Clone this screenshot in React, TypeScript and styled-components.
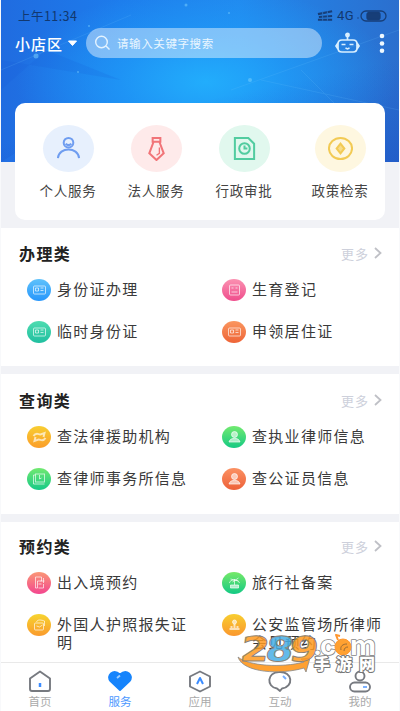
import React from 'react';
import styled, { createGlobalStyle } from 'styled-components';

const GlobalStyle = createGlobalStyle`
  * { box-sizing: border-box; }
  body {
    margin: 0;
    background: #fff;
    font-family: 'Noto Sans CJK SC', 'Noto Sans', sans-serif;
  }
  svg { display: block; flex: none; }
`;

const Screen = styled.div`
  position: relative;
  width: 400px;
  height: 711px;
  overflow: hidden;
  display: flex;
  flex-direction: column;
  background: #f1f2f6;
  border-left: 1px solid #f8f9fb;
  border-right: 1px solid #f8f9fb;
`;

const Hero = styled.header`
  height: 162px;
  flex: none;
  position: relative;
  color: #fff;
  background:
    linear-gradient(168deg, transparent 58%, rgba(20, 60, 190, 0.35) 100%),
    radial-gradient(ellipse 190px 95px at 205px 82px, #22adfc 0%, rgba(31, 160, 250, 0.65) 45%, transparent 100%),
    linear-gradient(90deg, #206ce0 0%, #1d7cec 30%, #2188ee 60%, #2b6fce 100%);
`;

const HeroArt = styled.svg`
  position: absolute;
  inset: 0;
`;

const StatusBar = styled.div`
  position: relative;
  height: 28px;
  padding: 3px 12px 0 17px;
  display: flex;
  justify-content: space-between;
  align-items: center;
  font-size: 12.5px;
  letter-spacing: 0.45px;
  color: #12386f;
`;

const StatusIcons = styled.div`
  display: flex;
  align-items: center;
  gap: 3px;
  font-family: Roboto, sans-serif;
  font-size: 13px;
`;

const SearchRow = styled.div`
  position: relative;
  height: 30px;
  display: flex;
  align-items: center;
  padding-left: 14px;
`;

const District = styled.div`
  display: flex;
  align-items: center;
  gap: 4px;
  width: 71px;
  font-size: 15px;
  font-weight: 500;
  letter-spacing: 1px;
  white-space: nowrap;
`;

const SearchBox = styled.div`
  display: flex;
  align-items: center;
  gap: 6px;
  width: 236px;
  height: 30px;
  border-radius: 15px;
  padding-left: 8px;
  background: rgba(255, 255, 255, 0.43);
  font-size: 11.5px;
  letter-spacing: 0.6px;
  color: #eaf6ff;
`;

const HeroActions = styled.div`
  display: flex;
  align-items: center;
  gap: 18px;
  margin-left: 12px;
`;

const ServiceCard = styled.section`
  position: relative;
  display: flex;
  flex: none;
  width: 370px;
  height: 117px;
  margin: -59px 0 8px 14px;
  padding: 22px 0 0 9px;
  background: #fff;
  border-radius: 10px;
`;

const Service = styled.div`
  width: 88px;
  display: flex;
  flex-direction: column;
  align-items: center;
  gap: 8px;
  font-size: 13.5px;
  line-height: 20px;
  letter-spacing: 0.8px;
  color: #444;
  white-space: nowrap;
  &:last-child { margin-left: 8px; }
`;

const ServiceDisc = styled.div<{ $tint: string }>`
  width: 51px;
  height: 47px;
  border-radius: 50%;
  display: grid;
  place-items: center;
  background: ${p => p.$tint};
`;

const Panel = styled.section<{ $height: number }>`
  flex: none;
  height: ${p => p.$height}px;
  margin-bottom: 8px;
  padding-left: 18px;
  background: #fff;
`;

const PanelHead = styled.div<{ $top: number }>`
  display: flex;
  align-items: center;
  justify-content: space-between;
  height: 24px;
  margin-top: ${p => p.$top}px;
  padding-right: 17px;
`;

const PanelTitle = styled.h2`
  margin: 0;
  font-size: 16px;
  line-height: 24px;
  font-weight: 700;
  letter-spacing: 1.4px;
  color: #222;
`;

const More = styled.span`
  display: flex;
  align-items: center;
  gap: 5px;
  font-size: 13px;
  letter-spacing: 1px;
  color: #cdd0db;
`;

const Entries = styled.div`
  display: grid;
  grid-template-columns: 195px 1fr;
  grid-auto-rows: 42px;
  padding: 14px 0 0 8px;
`;

const Entry = styled.div`
  display: flex;
  align-items: flex-start;
  gap: 6px;
`;

const EntryText = styled.span`
  width: 138px;
  padding-top: 1px;
  font-size: 15px;
  line-height: 18px;
  letter-spacing: 1.3px;
  color: #3a3a3a;
`;

const Disc = styled.div<{ $from: string; $to: string }>`
  width: 24px;
  height: 22px;
  flex: none;
  border-radius: 50%;
  display: grid;
  place-items: center;
  background: linear-gradient(${p => p.$from}, ${p => p.$to});
`;

const TabBar = styled.nav`
  position: absolute;
  left: 0;
  right: 0;
  bottom: 0;
  height: 49px;
  display: grid;
  grid-template-columns: repeat(5, 80px);
  margin-left: -1px;
  background: #fff;
  border-top: 1px solid #e9e9e9;
`;

const Tab = styled.div<{ $active?: boolean }>`
  display: flex;
  flex-direction: column;
  align-items: center;
  padding-top: 7px;
  font-size: 11.5px;
  line-height: 16px;
  color: ${p => (p.$active ? '#4c98ff' : '#aaa')};
`;

const Watermark = styled.svg`
  position: absolute;
  left: 233px;
  top: 632px;
`;

type Glyph = 'card' | 'form' | 'swap' | 'book' | 'person' | 'pass' | 'palm' | 'group' | 'case';

const glyphs: Record<Glyph, React.ReactNode> = {
  card: <><rect x="1" y="3" width="12" height="8" rx="1" /><path d="M3 5h3v3H3zM8 5h3M8 7.500h3" /></>,
  form: <><rect x="2" y="2" width="10" height="10" rx="1" /><path d="M4 5h2M8 5h2M4 9h6" /></>,
  swap: <path d="M1 6c3-5 6 0 8-2l3-1-1 4M13 8c-3 5-6 0-8 2l-3 1 1-4" strokeWidth="2" />,
  book: <><rect x="3" y="2" width="9" height="8" /><path d="M3 3H1v9h11M7 3v4l2-1" /></>,
  person: <><circle cx="7" cy="4.500" r="3" fill="#fff" /><path d="M1.500 12c1-5 10-5 11 0z" fill="#fff" /></>,
  pass: <><path d="M3 1h6v4H5v7H3zM6 12h5V8M8 5h4M11 2v5" /><path d="M6 8h3" /></>,
  palm: <><path d="M2 7c0-4 9-4 10 0M7 3v6M3 3l8 2M11 2 5 6" /><path d="M3 9h8v3H3z" fill="#fff" /></>,
  group: <><circle cx="7" cy="4" r="2" fill="#fff" /><path d="M2 11h10M3 9h2M9 9h2M7 6v4" strokeWidth="2" /></>,
  case: <><rect x="2" y="5" width="9" height="7" rx="1" /><path d="M4 4c1-3 5-2 8-1v5M4 8l3 1 3-2" /></>,
};

type Item = [label: string, glyph: Glyph, from: string, to: string];

const panels: { title: string; height: number; top: number; items: Item[] }[] = [
  {
    title: '办理类', height: 138, top: 13,
    items: [
      ['身份证办理', 'card', '#5fc2fb', '#2796fb'],
      ['生育登记', 'form', '#fb91b1', '#ef4d8c'],
      ['临时身份证', 'card', '#4fdcb0', '#20bfa0'],
      ['申领居住证', 'card', '#fa965f', '#ee6437'],
    ],
  },
  {
    title: '查询类', height: 140, top: 14,
    items: [
      ['查法律援助机构', 'swap', '#f8ce32', '#fb9d29'],
      ['查执业律师信息', 'person', '#72ea70', '#15c983'],
      ['查律师事务所信息', 'book', '#72e970', '#16c988'],
      ['查公证员信息', 'person', '#fb9163', '#ed6139'],
    ],
  },
  {
    title: '预约类', height: 190, top: 12,
    items: [
      ['出入境预约', 'pass', '#fa9776', '#f3468f'],
      ['旅行社备案', 'palm', '#76e968', '#13c985'],
      ['外国人护照报失证明', 'case', '#f7d42f', '#fa9a2d'],
      ['公安监管场所律师会见预约', 'group', '#f8ce30', '#fa972e'],
    ],
  },
];

const services = [
  {
    label: '个人服务', tint: '#e7f0fd', color: '#6f9df0',
    art: <><circle cx="13" cy="7" r="5" /><path d="M2 23c1-12 21-12 22 0M10 8c2 2 4 2 6 0" /></>,
  },
  {
    label: '法人服务', tint: '#feeaea', color: '#f17478',
    art: <><path d="M9 2h8v4H9zM10 6 5.500 18l7.500 7 7.500-7L16 6" /><path d="M16 12v6l-3 2" strokeWidth="1.400" /></>,
  },
  {
    label: '行政审批', tint: '#e1f8ee', color: '#52cca0',
    art: <><path d="M3 2h14l6 6v16H3z" /><circle cx="13" cy="13" r="5.500" /><path d="M13 10v3h3" /></>,
  },
  {
    label: '政策检索', tint: '#fef7e0', color: '#f2ca54',
    art: <><ellipse cx="13" cy="13" rx="12" ry="11" /><path d="m13 8 4 5-4 5-4-5z" fill="#f7dc8a" /></>,
  },
];

const tabs = [
  {
    label: '首页',
    art: <><path d="M2 8.500 12 1.500l10 7V19q0 2-2 2H4q-2 0-2-2z" /><path d="M12 13v4" stroke="#3c8cff" strokeWidth="2.500" /></>,
  },
  {
    label: '服务',
    art: <><path d="M12 20 2.500 11C-2 6 5-2 12 4.500 19-2 26 6 21.500 11z" fill="#1684fc" stroke="#1684fc" /><path d="m9 8 3-2.500" stroke="#9fceff" /></>,
  },
  {
    label: '应用',
    art: <><path d="m12 1.500 10 5v10l-10 5-10-5v-10z" /><path d="m9 14 3-6 3 6" stroke="#3c8cff" strokeWidth="2" /></>,
  },
  {
    label: '互动',
    art: <><path d="M9 18.500C-2 17-1 2 11 2c14-1 15 15 3 16.500L12 21z" /><path d="m15 6 3 3" stroke="#75adff" /></>,
  },
  {
    label: '我的',
    art: <><circle cx="12" cy="6" r="4.500" /><rect x="2" y="12.500" width="20" height="9" rx="4.500" /><path d="M15 17h4" stroke="#75adff" /></>,
  },
];

function DistrictCaret() {
  return <svg width="11" height="7" viewBox="0 0 10 7"><path d="M1 1h8L5 5.500z" fill="#fff" stroke="#fff" strokeLinejoin="round" /></svg>;
}

export default function App() {
  return (
    <>
      <GlobalStyle />
      <Screen>
        <Hero>
          <HeroArt width="398" height="162">
            <path d="M0 90 45 50 120 80 0 60z" fill="#1554d5" opacity=".14" />
            <path d="M0 162 90 105 220 162z" fill="#2f91ff" opacity=".16" />
            <path d="m230 90 168-60M260 80l138 30M0 70 130 15M300 70l60 60" stroke="#74c9ff" opacity=".15" />
            <g fill="#7dd2ff" opacity=".5">
              <circle cx="35" cy="56" r="2.500" /><circle cx="249" cy="80" r="2" /><circle cx="88" cy="26" r="1" />
              <circle cx="185" cy="5" r="1.500" /><circle cx="77" cy="72" r="1" /><circle cx="228" cy="13" r="1" />
            </g>
          </HeroArt>
          <StatusBar>
            <span>上午11:34</span>
            <StatusIcons>
              <svg width="17" height="12" viewBox="0 0 18 12" fill="none" stroke="#173e78" strokeWidth="2.200">
                <path d="M1 4 16 1M2 7l14-1M1 10h15" /><path d="M6 1v10M11 1v10" stroke="#2873c8" strokeWidth="1" />
              </svg>
              <span>4G</span>
              <svg width="30" height="12" viewBox="0 0 30 12" fill="none" stroke="#173e78" strokeWidth="1.300">
                <path d="M0 8h2" opacity=".5" /><rect x="4" y="1" width="25" height="10" rx="5" />
                <rect x="10" y="2.500" width="13" height="7" rx="2" fill="#173e78" />
              </svg>
            </StatusIcons>
          </StatusBar>
          <SearchRow>
            <District>小店区<DistrictCaret /></District>
            <SearchBox>
              <svg width="17" height="17" viewBox="0 0 17 17" fill="none" stroke="#e4f3ff" strokeWidth="1.400">
                <circle cx="7.500" cy="7" r="5.800" /><path d="m12 11 3.500 3.500" />
              </svg>
              请输入关键字搜索
            </SearchBox>
            <HeroActions>
              <svg width="27" height="22" viewBox="0 0 27 22" fill="none" stroke="#d9efff" strokeWidth="1.700">
                <path d="M13.500 4v4M8 8h11q4 0 4 4v4q0 4-4 4H8q-4 0-4-4v-4q0-4 4-4zM4 11l-2 3 2 3M23 11l2 3-2 3" />
                <circle cx="13.500" cy="3" r="1.600" fill="#d9efff" />
                <path d="M7.500 12.500h4M15.500 12.500h4M11.500 16l2 1 2-1" strokeWidth="1.400" />
              </svg>
              <svg width="6" height="20" viewBox="0 0 6 20" fill="#eef8ff">
                <circle cx="3" cy="3" r="2.300" /><circle cx="3" cy="10.500" r="2.300" /><circle cx="3" cy="17.700" r="2.300" />
              </svg>
            </HeroActions>
          </SearchRow>
        </Hero>

        <ServiceCard>
          {services.map(s => (
            <Service key={s.label}>
              <ServiceDisc $tint={s.tint}>
                <svg width="25" height="25" viewBox="0 0 26 26" fill="none" stroke={s.color} strokeWidth="2.100">{s.art}</svg>
              </ServiceDisc>
              {s.label}
            </Service>
          ))}
        </ServiceCard>

        {panels.map(p => (
          <Panel key={p.title} $height={p.height}>
            <PanelHead $top={p.top}>
              <PanelTitle>{p.title}</PanelTitle>
              <More>
                更多
                <svg width="8" height="12" viewBox="0 0 8 12" fill="none" stroke="#bfc0c6" strokeWidth="1.800"><path d="m1 1 5.500 5L1 11" /></svg>
              </More>
            </PanelHead>
            <Entries>
              {p.items.map(([label, glyph, from, to]) => (
                <Entry key={label}>
                  <Disc $from={from} $to={to}>
                    <svg width="15" height="14" viewBox="0 0 14 14" fill="none" stroke="#fff" strokeOpacity=".65" fillOpacity=".6">{glyphs[glyph]}</svg>
                  </Disc>
                  <EntryText>{label}</EntryText>
                </Entry>
              ))}
            </Entries>
          </Panel>
        ))}

        <TabBar>
          {tabs.map((t, i) => (
            <Tab key={t.label} $active={i === 1}>
              <svg width="24" height="23" viewBox="0 0 24 23" fill="none" stroke="#777a80" strokeWidth="1.900" strokeLinejoin="round">{t.art}</svg>
              {t.label}
            </Tab>
          ))}
        </TabBar>

        <Watermark width="145" height="46" viewBox="0 0 145 46" strokeLinejoin="round">
          <path d="M4 25c10 9 44 11 66 5l-3-3 9-1-4 14-2-4C47 43 9 41 4 25z" fill="#ffa131" stroke="#888" strokeWidth=".8" />
          <g fontFamily="'DejaVu Sans', sans-serif" fontWeight="700" fontSize="34" transform="translate(5 28.500) skewX(-8)" fillOpacity=".85" stroke="#8a8175" strokeWidth=".9">
            <text textLength="29" lengthAdjust="spacingAndGlyphs" fill="#ff9a20">2</text>
            <text x="25" textLength="28" lengthAdjust="spacingAndGlyphs" fill="#45aee5">8</text>
            <text x="49" textLength="29" lengthAdjust="spacingAndGlyphs" fill="#ff9a20">9</text>
          </g>
          <g fontFamily="Inter, sans-serif" fontWeight="700" fontSize="27" fill="#fff" stroke="#888" strokeWidth="1.600" paintOrder="stroke">
            <text x="79" y="23">.</text>
            <text x="86" y="23" textLength="16" lengthAdjust="spacingAndGlyphs">c</text>
            <text x="116" y="23" textLength="26" lengthAdjust="spacingAndGlyphs">m</text>
          </g>
          <g fill="none" stroke="#ff9830">
            <circle cx="109" cy="15" r="8" fill="#ffa131" />
            <path d="m104 8-2-5 4 1" strokeWidth="2" />
            <path d="M107 18c-1-4 2-6 6-6M110 19c0-3 2-4 4-4" stroke="#9a6b36" />
          </g>
          <g fontFamily="'Noto Sans CJK SC', sans-serif" fontWeight="900" fontSize="16" fill="#fff" stroke="#777" strokeWidth="2" paintOrder="stroke">
            <text x="80" y="38">手</text><text x="102" y="38">游</text><text x="125" y="38">网</text>
          </g>
        </Watermark>
      </Screen>
    </>
  );
}
